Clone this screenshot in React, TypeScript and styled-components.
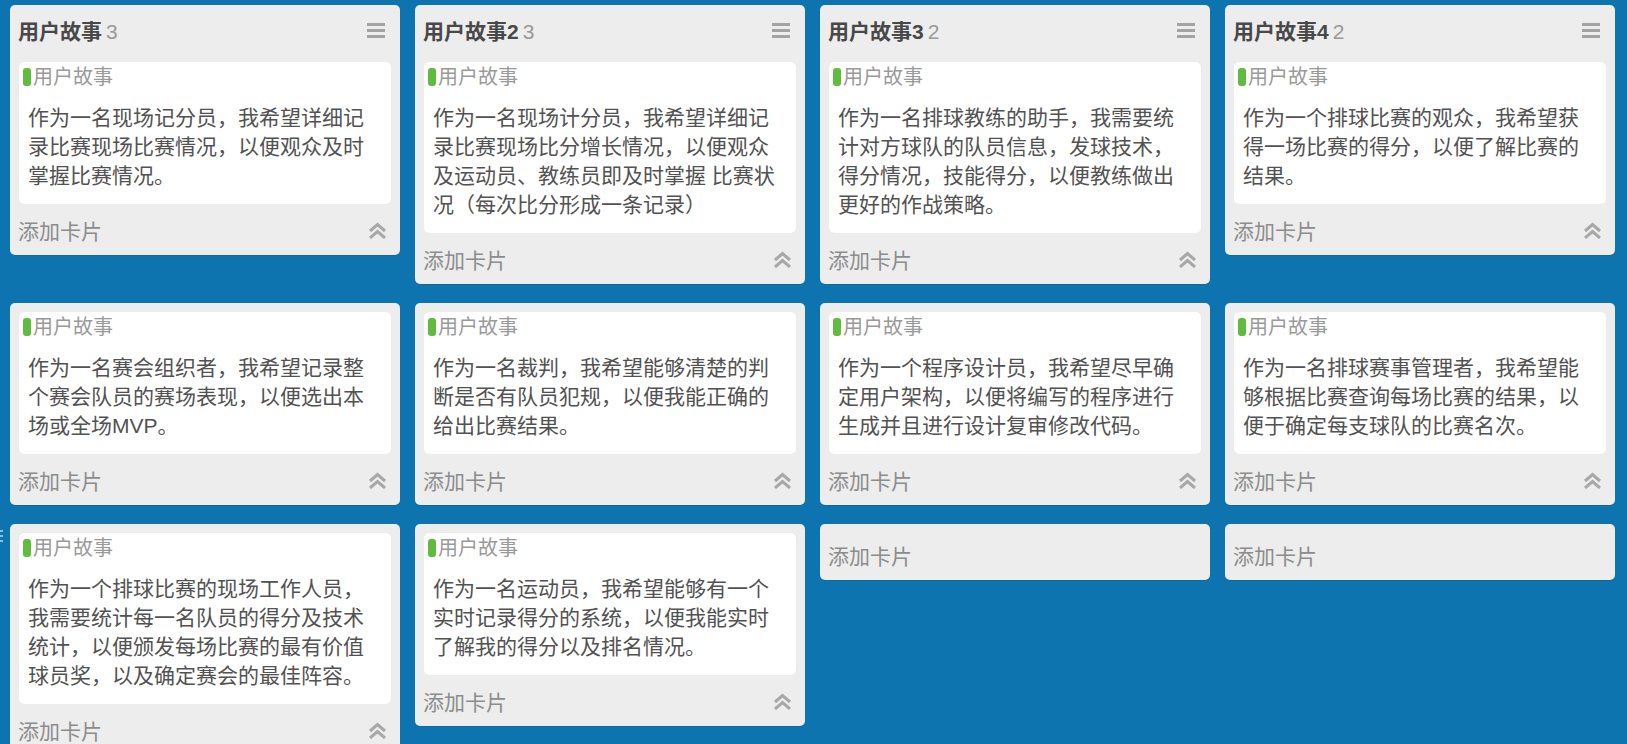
import React from 'react';
import styled, { createGlobalStyle } from 'styled-components';

const GlobalStyle = createGlobalStyle`
    html, body {
        margin: 0;
        padding: 0;
        background: #0e74b0;
    }
    body {
        font-family: "Liberation Sans", "Noto Sans CJK SC", sans-serif;
    }
`;

const Board = styled.div`
    position: relative;
    display: grid;
    grid-template-columns: repeat(4, 390px);
    column-gap: 15px;
    row-gap: 19px;
    align-items: start;
    padding: 5px 0 0 10px;
    height: 744px;
    box-sizing: border-box;
    overflow: hidden;
    background: #0e74b0;
`;

const EdgeHandle = styled.div`
    position: absolute;
    left: 0;
    top: 530px;
    display: flex;
    flex-direction: column;
    gap: 3px;

    span {
        display: block;
        width: 3px;
        height: 2px;
        background: #8fbcdc;
    }
`;

const List = styled.div<{ $emptyTop?: boolean }>`
    display: flex;
    flex-direction: column;
    background: #ededed;
    border-radius: 5px;
    padding-top: ${(p) => (p.$emptyTop ? '11px' : '0')};
    box-shadow: 0 1px 0 rgba(0, 0, 0, 0.08);
`;

const ListHeader = styled.div`
    display: flex;
    align-items: center;
    justify-content: space-between;
    height: 50px;
    padding: 0 15px 0 8px;
`;

const Title = styled.div`
    font-size: 21px;
    font-weight: 700;
    color: #484848;
    display: flex;
    align-items: baseline;
`;

const Count = styled.span`
    font-weight: 400;
    color: #999;
    margin-left: 4px;
`;

const MenuIcon = styled.div`
    display: flex;
    flex-direction: column;
    gap: 3px;
    width: 18px;

    span {
        display: block;
        height: 3px;
        background: #a3a3a3;
    }
`;

const CardArea = styled.div<{ $top: number }>`
    padding: ${(p) => p.$top}px 9px 0;
`;

const Card = styled.div`
    background: #fff;
    border-radius: 5px;
    padding: 5px 9px 14px 4px;
    margin-bottom: 6px;
    box-shadow: 0 0 1px rgba(0, 0, 0, 0.06);
`;

const LabelRow = styled.div`
    display: flex;
    align-items: center;
    height: 20px;
`;

const LabelBar = styled.span`
    width: 8px;
    height: 18px;
    border-radius: 3px;
    background: #61bb3f;
    margin-right: 2px;
`;

const LabelText = styled.span`
    font-size: 20px;
    line-height: 20px;
    color: #9a9a9a;
`;

const Body = styled.div`
    margin-top: 16px;
    padding-left: 5px;
    font-size: 21px;
    line-height: 29px;
    color: #525252;
`;

const Footer = styled.div`
    display: flex;
    align-items: center;
    justify-content: space-between;
    height: 45px;
    box-sizing: border-box;
    padding: 0 13px 5px 8px;
    font-size: 21px;
    color: #8c8c8c;
`;

const ChevronUp = () => (
    <svg width="19" height="17" viewBox="0 0 19 17" fill="none" stroke="#a8a8a8" strokeWidth="3" strokeLinejoin="miter">
        <polyline points="2,9 9.5,2.5 17,9" />
        <polyline points="2,16 9.5,9.5 17,16" />
    </svg>
);

type Column = {
    title?: string;
    count?: number;
    cards: string[];
};

const columns: Column[] = [
    { title: '用户故事', count: 3, cards: ['作为一名现场记分员，我希望详细记录比赛现场比赛情况，以便观众及时掌握比赛情况。'] },
    { title: '用户故事2', count: 3, cards: ['作为一名现场计分员，我希望详细记录比赛现场比分增长情况，以便观众及运动员、教练员即及时掌握 比赛状况（每次比分形成一条记录）'] },
    { title: '用户故事3', count: 2, cards: ['作为一名排球教练的助手，我需要统计对方球队的队员信息，发球技术，得分情况，技能得分，以便教练做出更好的作战策略。'] },
    { title: '用户故事4', count: 2, cards: ['作为一个排球比赛的观众，我希望获得一场比赛的得分，以便了解比赛的结果。'] },
    { cards: ['作为一名赛会组织者，我希望记录整个赛会队员的赛场表现，以便选出本场或全场MVP。'] },
    { cards: ['作为一名裁判，我希望能够清楚的判断是否有队员犯规，以便我能正确的给出比赛结果。'] },
    { cards: ['作为一个程序设计员，我希望尽早确定用户架构，以便将编写的程序进行生成并且进行设计复审修改代码。'] },
    { cards: ['作为一名排球赛事管理者，我希望能够根据比赛查询每场比赛的结果，以便于确定每支球队的比赛名次。'] },
    { cards: ['作为一个排球比赛的现场工作人员，我需要统计每一名队员的得分及技术统计，以便颁发每场比赛的最有价值球员奖，以及确定赛会的最佳阵容。'] },
    { cards: ['作为一名运动员，我希望能够有一个实时记录得分的系统，以便我能实时了解我的得分以及排名情况。'] },
    { cards: [] },
    { cards: [] }
];

const App = () => {
    return (
        <>
            <GlobalStyle />
            <Board>
                <EdgeHandle>
                    <span />
                    <span />
                    <span />
                </EdgeHandle>
                {columns.map((col, i) => (
                    <List key={i} $emptyTop={!col.title && col.cards.length === 0}>
                        {col.title && (
                            <ListHeader>
                                <Title>
                                    {col.title}
                                    <Count>{col.count}</Count>
                                </Title>
                                <MenuIcon>
                                    <span />
                                    <span />
                                    <span />
                                </MenuIcon>
                            </ListHeader>
                        )}
                        {col.cards.length > 0 && (
                            <CardArea $top={col.title ? 7 : 9}>
                                {col.cards.map((text, j) => (
                                    <Card key={j}>
                                        <LabelRow>
                                            <LabelBar />
                                            <LabelText>用户故事</LabelText>
                                        </LabelRow>
                                        <Body>{text}</Body>
                                    </Card>
                                ))}
                            </CardArea>
                        )}
                        <Footer>
                            添加卡片
                            {col.cards.length > 0 && <ChevronUp />}
                        </Footer>
                    </List>
                ))}
            </Board>
        </>
    );
};

export default App;
